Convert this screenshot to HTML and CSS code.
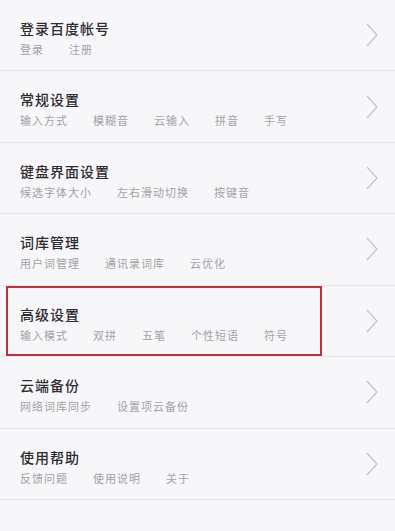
FILE: index.html
```html
<!DOCTYPE html>
<html lang="zh-CN">
<head>
<meta charset="utf-8">
<title>设置</title>
<link rel="stylesheet" href="styles.css">
</head>
<body>
<ul class="list">
  <li class="item">
    <div class="text">
      <div class="title">登录百度帐号</div>
      <div class="subs"><span>登录</span><span>注册</span></div>
    </div>
    <svg class="chev" viewBox="0 0 12 24" width="12" height="24"><path d="M1 1 L11 12 L1 23" /></svg>
  </li>
  <li class="item">
    <div class="text">
      <div class="title">常规设置</div>
      <div class="subs"><span>输入方式</span><span>模糊音</span><span>云输入</span><span>拼音</span><span>手写</span></div>
    </div>
    <svg class="chev" viewBox="0 0 12 24" width="12" height="24"><path d="M1 1 L11 12 L1 23" /></svg>
  </li>
  <li class="item">
    <div class="text">
      <div class="title">键盘界面设置</div>
      <div class="subs"><span>候选字体大小</span><span>左右滑动切换</span><span>按键音</span></div>
    </div>
    <svg class="chev" viewBox="0 0 12 24" width="12" height="24"><path d="M1 1 L11 12 L1 23" /></svg>
  </li>
  <li class="item">
    <div class="text">
      <div class="title">词库管理</div>
      <div class="subs"><span>用户词管理</span><span>通讯录词库</span><span>云优化</span></div>
    </div>
    <svg class="chev" viewBox="0 0 12 24" width="12" height="24"><path d="M1 1 L11 12 L1 23" /></svg>
  </li>
  <li class="item highlighted">
    <div class="text">
      <div class="title">高级设置</div>
      <div class="subs"><span>输入模式</span><span>双拼</span><span>五笔</span><span>个性短语</span><span>符号</span></div>
    </div>
    <svg class="chev" viewBox="0 0 12 24" width="12" height="24"><path d="M1 1 L11 12 L1 23" /></svg>
    <div class="mark"></div>
  </li>
  <li class="item">
    <div class="text">
      <div class="title">云端备份</div>
      <div class="subs"><span>网络词库同步</span><span>设置项云备份</span></div>
    </div>
    <svg class="chev" viewBox="0 0 12 24" width="12" height="24"><path d="M1 1 L11 12 L1 23" /></svg>
  </li>
  <li class="item">
    <div class="text">
      <div class="title">使用帮助</div>
      <div class="subs"><span>反馈问题</span><span>使用说明</span><span>关于</span></div>
    </div>
    <svg class="chev" viewBox="0 0 12 24" width="12" height="24"><path d="M1 1 L11 12 L1 23" /></svg>
  </li>
</ul>
</body>
</html>
```
FILE: styles.css
```css
html, body {
  margin: 0;
  padding: 0;
  background: #f7f6f9;
  font-family: "Noto Sans CJK SC", "Noto Sans", sans-serif;
}
.list {
  list-style: none;
  margin: 0;
  padding: 0;
}
.item {
  position: relative;
  display: flex;
  align-items: flex-start;
  justify-content: space-between;
  border-bottom: 1px solid #e6e5e9;
  padding: 19px 17px 0 20px;
  box-sizing: content-box;
  height: 51.43px;
}
.text {
  display: flex;
  flex-direction: column;
}
.title {
  font-size: 14px;
  line-height: 18px;
  letter-spacing: 1px;
  font-weight: 500;
  color: #2c2b2f;
}
.subs {
  display: flex;
  gap: 25px;
  margin-top: 5px;
  font-size: 11px;
  line-height: 14px;
  letter-spacing: 1px;
  color: #a3a2a6;
}
.chev {
  align-self: center;
  margin-top: -19px;
  fill: none;
  stroke: #c3c2c6;
  stroke-width: 1.2;
}
.mark {
  position: absolute;
  left: 6px;
  top: 0;
  width: 312px;
  height: 66px;
  border: 2px solid #bf3039;
}
```
